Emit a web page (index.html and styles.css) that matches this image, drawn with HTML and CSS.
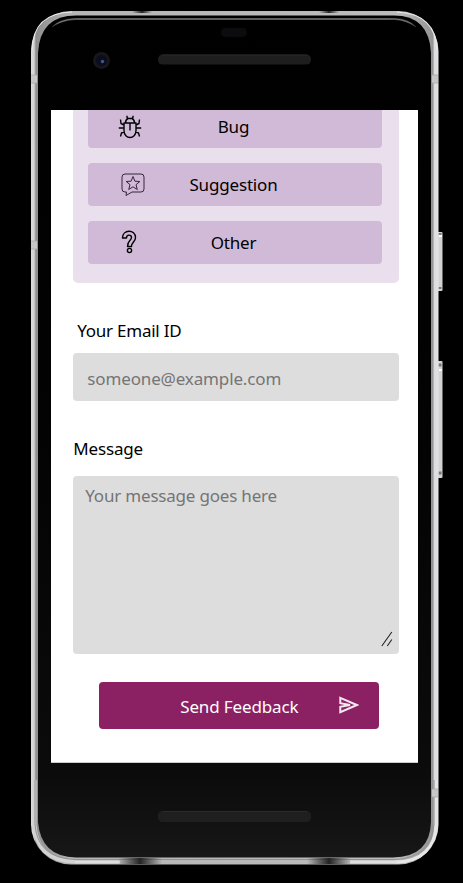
FILE: index.html
```html
<!DOCTYPE html>
<html lang="en">
<head>
<meta charset="utf-8">
<title>Feedback</title>
<link rel="stylesheet" href="styles.css">
</head>
<body>
<div class="phone">
  <svg class="frame" viewBox="0 0 463 883" aria-hidden="true">
    <defs>
      <linearGradient id="rim" x1="0" x2="1" y1="0" y2="0">
        <stop offset="0" stop-color="#dedede"/><stop offset=".008" stop-color="#d0d0d0"/><stop offset=".012" stop-color="#8e8e8e"/><stop offset=".1" stop-color="#b5b6b5"/><stop offset=".9" stop-color="#bcbcbc"/><stop offset=".986" stop-color="#949496"/><stop offset=".99" stop-color="#dcdcdf"/><stop offset="1" stop-color="#e2e2e4"/>
      </linearGradient>
      <linearGradient id="glass" x1="0" x2="0" y1="0" y2="1">
        <stop offset="0" stop-color="#000"/><stop offset=".5" stop-color="#030303"/><stop offset=".9" stop-color="#0b0b0b"/><stop offset="1" stop-color="#171717"/>
      </linearGradient>
      <linearGradient id="shade" x1="0" x2="1" y1="0" y2="0">
        <stop offset="0" stop-color="#222" stop-opacity="0"/><stop offset=".5" stop-color="#222"/><stop offset="1" stop-color="#222" stop-opacity="0"/>
      </linearGradient>
      <linearGradient id="sheen" x1="0" x2="1" y1="0" y2="0">
        <stop offset="0" stop-color="#777" stop-opacity=".3"/><stop offset=".08" stop-color="#777"/><stop offset=".92" stop-color="#777"/><stop offset="1" stop-color="#777" stop-opacity=".3"/>
      </linearGradient>
    </defs>
    <g fill="#d2d2d2">
      <rect x="436" y="232" width="6.500" height="59" rx="1"/>
      <rect x="436" y="361" width="6.500" height="117" rx="1"/>
    </g>
    <g fill="#777">
      <rect x="438.500" y="233" width="3" height="2"/><rect x="438.500" y="287" width="3" height="2"/>
      <rect x="438.500" y="363.500" width="3" height="3"/><rect x="438.500" y="471.500" width="3" height="3"/>
    </g>
    <path d="M439 236h3M439 370h3" stroke="#fff" stroke-width="2"/>
    <rect x="31" y="11" width="407.500" height="853.500" rx="40" fill="url(#rim)"/>
    <path d="M32 50Q33 13 72 12M397 12Q436 14 437 50M437 820Q436 862 397 863" fill="none" stroke="#e8e8e8" stroke-width="1.200"/>
    <path d="M34.500 780V824Q36 861 75 861.500" fill="none" stroke="#d2d2d2" stroke-width="4"/>
    <path d="M436.500 780V824Q434 861.500 395 862" fill="none" stroke="#e6e6e6" stroke-width="3"/>
    <path d="M35 780V824Q37 858 75 859.500H395Q431 858 434 824V780" fill="none" stroke="#929292"/>
    <path d="M75 862H120M350 862H397" stroke="#dedede" stroke-width="3"/>
    <rect x="118" y="858" width="44" height="6" fill="url(#shade)"/>
    <rect x="307" y="858" width="44" height="6" fill="url(#shade)"/>
    <rect x="132" y="11" width="20" height="2" fill="url(#shade)"/>
    <rect x="319" y="11" width="20" height="2" fill="url(#shade)"/>
    <path d="M38 53Q40 15.500 76 15.500H394Q429 15.500 431 53V822Q430 857 393 857.500H76Q41 857 38 822Z" fill="url(#glass)"/>
    <path d="M52 27Q59 19 75 18.500H395Q409 19 416 27Q407 20.500 395 19.500H75Q61 20.500 52 27Z" fill="#777" stroke="url(#sheen)" stroke-width=".6"/>
    <g fill="#c6c6c6">
      <rect x="31" y="75" width="6" height="8"/><rect x="31" y="241" width="6" height="8"/><rect x="432" y="75" width="6" height="8"/><rect x="432" y="789" width="6" height="8"/>
    </g>
    <path d="M31 75h6M31 83h6M31 241h6M31 249h6M432 75h6M432 83h6M432 789h6M432 797h6" stroke="#a5a5a5" stroke-width=".7"/>
    <rect x="221" y="28" width="26" height="9" rx="4.500" fill="#0c0c0f"/>
    <circle cx="101.500" cy="60.500" r="8.500" fill="#171717"/>
    <circle cx="101.500" cy="60.500" r="5.500" fill="#0b0c22"/>
    <circle cx="102.500" cy="61.500" r="1.700" fill="#3d5a7d"/>
    <rect x="158" y="54.500" width="153" height="10" rx="4.500" fill="#1e1e1e"/>
    <path d="M162 55h145" stroke="#2b2b2b"/>
    <rect x="158" y="811" width="153" height="11" rx="4.500" fill="#1f1f1f"/>
    <path d="M162 811.500h145" stroke="#2a2a2a"/>
  </svg>
  <main class="screen">
    <section class="choices">
      <button class="choice"><svg class="icon bug" viewBox="0 0 24 24"><path d="M6 8H18V15.500C18 24.800 6 24.800 6 15.500ZM7.500 8Q7.500 4.500 10 3.500H14Q16.500 4.500 16.500 8M9 .800V2.500L10.500 3.500M15 .800V2.500L13.500 3.500M12 8V15.500M6 10L3 8.500L2.500 4.500M18 10L21 8.500L21.500 4.500M6 13H.800M18 13H23.200M6.500 16.500L3.500 18L2.500 21.500M17.500 16.500L20.500 18L21.500 21.500"/></svg><span>Bug</span></button>
      <button class="choice"><svg class="icon suggestion" viewBox="0 0 24 24"><path d="M4 1H20Q23 1 23 4V16Q23 19 20 19H11L5 22.500L5.500 19H4Q1 19 1 16V4Q1 1 4 1Z"/><path d="M12 3.500L13.900 8.200L18.800 8.500L15 11.700L16.300 16.500L12 13.800L7.700 16.500L9 11.700L5.200 8.500L10.100 8.200Z"/></svg><span>Suggestion</span></button>
      <button class="choice"><svg class="icon other" viewBox="0 0 16 24"><path d="M1.500 8C1.500-1 14.500-1 14.500 7.500C14.500 12 10.500 12 10.500 16.500H6.500C6.500 10.500 10.500 10.500 10.500 7.500C10.500 4.200 5.500 4.200 5.500 8Z"/><circle cx="8.500" cy="20.500" r="2.100"/></svg><span>Other</span></button>
    </section>
    <form class="form">
      <label class="label email-label" for="email">Your Email ID</label>
      <input class="field email" id="email" placeholder="someone@example.com">
      <label class="label message-label" for="message">Message</label>
      <div class="message-box">
        <textarea class="field message" id="message" placeholder="Your message goes here"></textarea>
        <svg class="grip" viewBox="0 0 12 16"><path d="M.800 15L10.800 1M6.300 15L10.800 8.500"/></svg>
      </div>
      <button class="send" type="button"><span>Send Feedback</span><svg class="plane" viewBox="0 0 20 18"><path d="M1.300 1.800L17.800 9L1.300 16.200V10.800L11 9L1.300 7.200Z"/></svg></button>
    </form>
  </main>
</div>
</body>
</html>
```

FILE: styles.css
```css
* { box-sizing: border-box; }
body {
  margin: 0;
  background: #000;
  color: #000;
  font-family: "Noto Sans", sans-serif;
  font-size: 17px;
  letter-spacing: -.17px;
}
.phone {
  position: relative;
  width: 463px;
  height: 883px;
  padding: 110px 45px 120px 51px;
  overflow: hidden;
}
.frame {
  position: absolute;
  inset: 0;
  width: 463px;
  height: 883px;
}
.screen {
  position: relative;
  height: 653px;
  padding: 0 19.300px 0 22.300px;
  background: #fff;
  border-bottom: 1px solid #ccc;
  overflow: hidden;
}
.choices {
  display: flex;
  flex-direction: column;
  gap: 15px;
  height: 173.300px;
  padding: 0 17px 20px 15px;
  background: #eae0ed;
  border-radius: 0 0 5px 5px;
}
.choice {
  position: relative;
  flex: none;
  height: 43px;
  padding: 0 3px 0 0;
  border: 0;
  border-radius: 4px;
  background: #d1bad8;
  font: inherit;
  letter-spacing: inherit;
  color: #000;
  line-height: 43px;
}
.choice:first-child {
  height: 37.700px;
  padding-bottom: 3px;
  line-height: 34px;
  border-radius: 0 0 4px 4px;
}
.icon {
  position: absolute;
  left: 32px;
  top: 9px;
  width: 24px;
  height: 24px;
  fill: none;
  stroke: #000;
  stroke-width: 1.400;
  stroke-linejoin: round;
}
.bug { left: 30px; top: 5px; }
.suggestion { left: 32.700px; top: 10px; stroke: #34273a; stroke-width: 1; }
.other { left: 32.300px; top: 9px; width: 16px; }
.form {
  display: flex;
  flex-direction: column;
}
.label {
  height: 24px;
  line-height: 24px;
}
.email-label { margin: 36px 0 10px 4px; letter-spacing: -.25px; }
.message-label { margin: 36px 0 15.300px; }
.field {
  display: block;
  width: 100%;
  border: 0;
  border-radius: 4px;
  background: #ddd;
  font: inherit;
  letter-spacing: -.14px;
  outline: 0;
  resize: none;
}
.field::placeholder { color: #757575; opacity: 1; }
.email {
  height: 47.300px;
  padding: 3px 14px 0;
}
.message-box {
  position: relative;
  height: 178px;
}
.message {
  height: 178px;
  padding: 8px 12px;
  letter-spacing: -.2px;
}
.grip {
  position: absolute;
  right: 6px;
  bottom: 7px;
  width: 12px;
  height: 16px;
  fill: none;
  stroke: #222;
  stroke-width: 1.100;
}
.send {
  position: relative;
  width: 280px;
  height: 46.300px;
  margin: 28.500px 0 0 26px;
  padding: 2px 0 0;
  border: 0;
  border-radius: 4px;
  background: #8b2063;
  color: #fff;
  font: inherit;
  letter-spacing: -.14px;
}
.plane {
  position: absolute;
  right: 20.500px;
  top: 14px;
  width: 20px;
  height: 18px;
  fill: none;
  stroke: #f1e8ee;
  stroke-width: 2;
}
```
